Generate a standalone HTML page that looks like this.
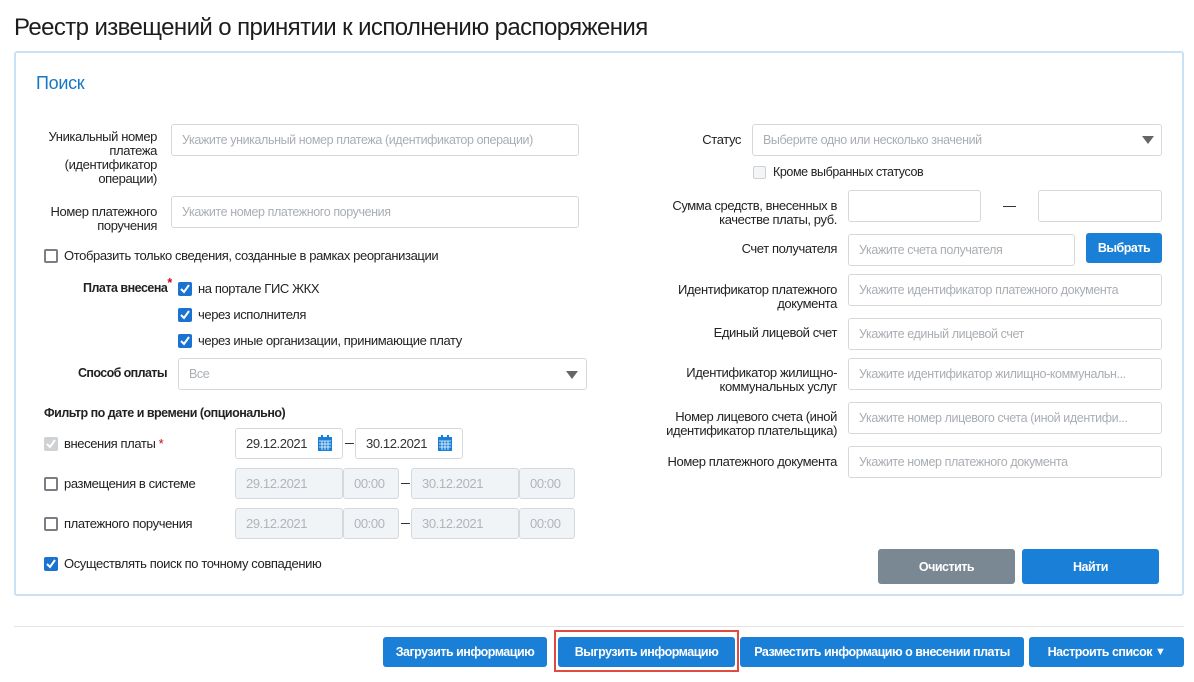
<!DOCTYPE html>
<html><head><meta charset="utf-8">
<style>
*{box-sizing:border-box;margin:0;padding:0}
body{width:1194px;height:682px;background:#fff;font-family:"Liberation Sans",sans-serif;color:#222;position:relative;overflow:hidden;font-size:13px;letter-spacing:-0.4px}
.a{position:absolute}
.t{position:absolute;white-space:nowrap}
.r{text-align:right;line-height:14px}
.in{position:absolute;border:1px solid #d6d9dc;border-radius:3px;background:#fff;color:#a9aeb3;font-size:12.5px;padding-left:10px;display:flex;align-items:center;white-space:nowrap;overflow:hidden}
.dis{background:#f1f4f7;color:#b0b5ba}
.cb{position:absolute;width:14px;height:14px;border:2px solid #7d7d85;border-radius:2px;background:#fff}
.cbc{position:absolute;width:14px;height:14px;border-radius:2px;background:#1a73d0}
.cbc svg,.cbg svg{position:absolute;left:2px;top:2px}
.cbg{position:absolute;width:14px;height:14px;border-radius:2px;background:#cfd2d5}
.btn{position:absolute;background:#1a7fd6;color:#fff;border-radius:3px;display:flex;align-items:center;justify-content:center;font-weight:bold;font-size:12.5px;white-space:nowrap;letter-spacing:-0.5px}
.dash{position:absolute;width:9px;height:1px;background:#333}
.cal{position:absolute;width:14px;height:16px}
</style></head><body>
<div class="t" style="left:14px;top:14px;font-size:24px;letter-spacing:-0.6px;color:#1d1d1d">Реестр извещений о принятии к исполнению распоряжения</div>
<div class="a" style="left:14px;top:51px;width:1170px;height:545px;border:2px solid #c8e1f5;border-radius:3px"></div>
<div class="t" style="left:36px;top:73px;font-size:18px;color:#1776c5;letter-spacing:-0.3px">Поиск</div>

<div class="t r" style="right:1037px;top:130px">Уникальный номер<br>платежа<br>(идентификатор<br>операции)</div>
<div class="in" style="left:171px;top:124px;width:408px;height:32px">Укажите уникальный номер платежа (идентификатор операции)</div>
<div class="t r" style="right:1037px;top:205px">Номер платежного<br>поручения</div>
<div class="in" style="left:171px;top:196px;width:408px;height:32px">Укажите номер платежного поручения</div>
<div class="cb" style="left:44px;top:249px"></div>
<div class="t" style="left:64px;top:248px">Отобразить только сведения, созданные в рамках реорганизации</div>
<div class="t" style="left:83px;top:281px;font-weight:bold;font-size:12.5px;letter-spacing:-0.5px">Плата внесена<span style="color:#d0021b;position:relative;top:-5px">*</span></div>
<div class="cbc" style="left:178px;top:282px"><svg width="10" height="10"><path d="M1 5l3 3 5-7" stroke="#fff" stroke-width="2" fill="none"/></svg></div>
<div class="t" style="left:198px;top:281px">на портале ГИС ЖКХ</div>
<div class="cbc" style="left:178px;top:308px"><svg width="10" height="10"><path d="M1 5l3 3 5-7" stroke="#fff" stroke-width="2" fill="none"/></svg></div>
<div class="t" style="left:198px;top:307px">через исполнителя</div>
<div class="cbc" style="left:178px;top:334px"><svg width="10" height="10"><path d="M1 5l3 3 5-7" stroke="#fff" stroke-width="2" fill="none"/></svg></div>
<div class="t" style="left:198px;top:333px">через иные организации, принимающие плату</div>
<div class="t" style="left:78px;top:366px;font-weight:bold;font-size:12.5px;letter-spacing:-0.6px">Способ оплаты</div>
<div class="in" style="left:178px;top:358px;width:409px;height:32px">Все</div>
<div class="a" style="left:566px;top:371px;width:0;height:0;border-left:6px solid transparent;border-right:6px solid transparent;border-top:8px solid #666"></div>

<div class="t" style="left:44px;top:406px;font-weight:bold;font-size:12.5px;letter-spacing:-0.5px">Фильтр по дате и времени (опционально)</div>
<div class="cbg" style="left:44px;top:437px"><svg width="10" height="10"><path d="M1 5l3 3 5-7" stroke="#fff" stroke-width="2" fill="none"/></svg></div>
<div class="t" style="left:64px;top:436px">внесения платы <span style="color:#d0021b">*</span></div>
<div class="in" style="left:235px;top:428px;width:108px;height:31px;color:#333;font-size:13px">29.12.2021</div>
<svg class="cal" style="left:318px;top:435px" viewBox="0 0 14 16"><rect x="0" y="2" width="14" height="14" fill="#1a7fd6"/><rect x="3" y="0" width="2" height="4" fill="#1a7fd6"/><rect x="9" y="0" width="2" height="4" fill="#1a7fd6"/><path d="M1 6h12M1 9h12M1 12h12M4 6v9M7 6v9M10 6v9" stroke="#fff" stroke-width=".8"/></svg>
<div class="dash" style="left:345px;top:443px"></div>
<div class="in" style="left:355px;top:428px;width:108px;height:31px;color:#333;font-size:13px">30.12.2021</div>
<svg class="cal" style="left:438px;top:435px" viewBox="0 0 14 16"><rect x="0" y="2" width="14" height="14" fill="#1a7fd6"/><rect x="3" y="0" width="2" height="4" fill="#1a7fd6"/><rect x="9" y="0" width="2" height="4" fill="#1a7fd6"/><path d="M1 6h12M1 9h12M1 12h12M4 6v9M7 6v9M10 6v9" stroke="#fff" stroke-width=".8"/></svg>

<div class="cb" style="left:44px;top:477px"></div>
<div class="t" style="left:64px;top:476px">размещения в системе</div>
<div class="in dis" style="left:235px;top:468px;width:108px;height:31px;font-size:13px">29.12.2021</div>
<div class="in dis" style="left:343px;top:468px;width:56px;height:31px;font-size:13px">00:00</div>
<div class="dash" style="left:401px;top:483px"></div>
<div class="in dis" style="left:411px;top:468px;width:108px;height:31px;font-size:13px">30.12.2021</div>
<div class="in dis" style="left:519px;top:468px;width:56px;height:31px;font-size:13px">00:00</div>

<div class="cb" style="left:44px;top:517px"></div>
<div class="t" style="left:64px;top:516px">платежного поручения</div>
<div class="in dis" style="left:235px;top:508px;width:108px;height:31px;font-size:13px">29.12.2021</div>
<div class="in dis" style="left:343px;top:508px;width:56px;height:31px;font-size:13px">00:00</div>
<div class="dash" style="left:401px;top:523px"></div>
<div class="in dis" style="left:411px;top:508px;width:108px;height:31px;font-size:13px">30.12.2021</div>
<div class="in dis" style="left:519px;top:508px;width:56px;height:31px;font-size:13px">00:00</div>

<div class="cbc" style="left:44px;top:557px"><svg width="10" height="10"><path d="M1 5l3 3 5-7" stroke="#fff" stroke-width="2" fill="none"/></svg></div>
<div class="t" style="left:64px;top:556px">Осуществлять поиск по точному совпадению</div>

<!-- right -->
<div class="t r" style="right:453px;top:133px">Статус</div>
<div class="in" style="left:752px;top:124px;width:410px;height:32px">Выберите одно или несколько значений</div>
<div class="a" style="left:1142px;top:136px;width:0;height:0;border-left:6px solid transparent;border-right:6px solid transparent;border-top:8px solid #666"></div>
<div class="a" style="left:753px;top:166px;width:13px;height:13px;border:1px solid #cfd2d5;border-radius:2px;background:#f4f5f6"></div>
<div class="t" style="left:773px;top:165px;font-size:12.5px">Кроме выбранных статусов</div>
<div class="t r" style="right:357px;top:199px">Сумма средств, внесенных в<br>качестве платы, руб.</div>
<div class="in" style="left:848px;top:190px;width:133px;height:32px"></div>
<div class="a" style="left:1003px;top:206px;width:13px;height:1px;background:#333"></div>
<div class="in" style="left:1038px;top:190px;width:124px;height:32px"></div>
<div class="t r" style="right:357px;top:242px">Счет получателя</div>
<div class="in" style="left:848px;top:234px;width:227px;height:32px">Укажите счета получателя</div>
<div class="btn" style="left:1086px;top:233px;width:76px;height:30px">Выбрать</div>
<div class="t r" style="right:357px;top:283px">Идентификатор платежного<br>документа</div>
<div class="in" style="left:848px;top:274px;width:314px;height:32px">Укажите идентификатор платежного документа</div>
<div class="t r" style="right:357px;top:326px">Единый лицевой счет</div>
<div class="in" style="left:848px;top:318px;width:314px;height:32px">Укажите единый лицевой счет</div>
<div class="t r" style="right:357px;top:366px">Идентификатор жилищно-<br>коммунальных услуг</div>
<div class="in" style="left:848px;top:358px;width:314px;height:32px">Укажите идентификатор жилищно-коммунальн...</div>
<div class="t r" style="right:357px;top:410px">Номер лицевого счета (иной<br>идентификатор плательщика)</div>
<div class="in" style="left:848px;top:402px;width:314px;height:32px">Укажите номер лицевого счета (иной идентифи...</div>
<div class="t r" style="right:357px;top:455px">Номер платежного документа</div>
<div class="in" style="left:848px;top:446px;width:314px;height:32px">Укажите номер платежного документа</div>

<div class="btn" style="left:878px;top:549px;width:137px;height:35px;background:#7a8893">Очистить</div>
<div class="btn" style="left:1022px;top:549px;width:137px;height:35px">Найти</div>

<div class="a" style="left:14px;top:626px;width:1170px;height:1px;background:#e2e4e6"></div>
<div class="btn" style="left:383px;top:637px;width:164px;height:30px">Загрузить информацию</div>
<div class="a" style="left:554px;top:630px;width:185px;height:42px;border:2px solid #e04a40"></div>
<div class="btn" style="left:558px;top:637px;width:177px;height:30px">Выгрузить информацию</div>
<div class="btn" style="left:740px;top:637px;width:284px;height:30px">Разместить информацию о внесении платы</div>
<div class="btn" style="left:1029px;top:637px;width:155px;height:30px">Настроить список&nbsp;<span style="font-size:11px">▼</span></div>
</body></html>
